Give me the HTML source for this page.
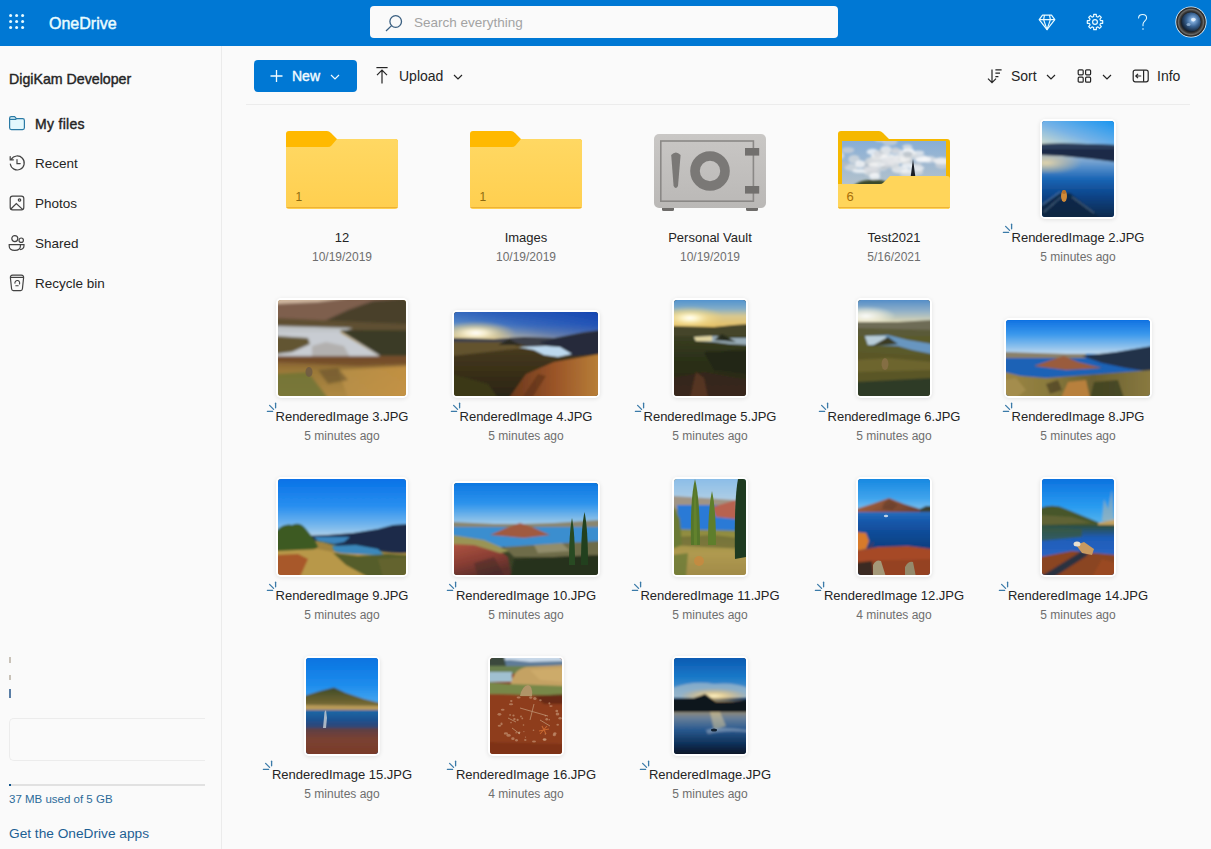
<!DOCTYPE html>
<html><head><meta charset="utf-8">
<style>
*{box-sizing:border-box}
html,body{margin:0;padding:0}
body{width:1211px;height:849px;overflow:hidden;background:#fafafa;font-family:"Liberation Sans",sans-serif;color:#242424;position:relative}
.a{position:absolute}
.t{position:absolute;white-space:nowrap;line-height:16px}
.nm{position:absolute;text-align:center;font-size:13px;color:#242424;line-height:16px;white-space:nowrap;width:184px}
.dt{position:absolute;text-align:center;font-size:12px;color:#6e6e6e;line-height:14px;white-space:nowrap;width:184px}
.ph{position:absolute;border-radius:3px;box-shadow:0 0 0 2px #fff,0 1px 4px 2px rgba(0,0,0,0.10);overflow:hidden}
.ph svg{display:block}
</style></head><body>
<div class="a" style="left:0;top:0;width:1211px;height:46px;background:#0078d4"></div><svg class="a" style="left:0;top:0" width="30" height="45"><g fill="#e6fbff"><circle cx="10.6" cy="15.4" r="1.5"/><circle cx="10.6" cy="21.4" r="1.5"/><circle cx="10.6" cy="27.4" r="1.5"/><circle cx="16.6" cy="15.4" r="1.5"/><circle cx="16.6" cy="21.4" r="1.5"/><circle cx="16.6" cy="27.4" r="1.5"/><circle cx="22.6" cy="15.4" r="1.5"/><circle cx="22.6" cy="21.4" r="1.5"/><circle cx="22.6" cy="27.4" r="1.5"/></g></svg><div class="t" style="left:49px;top:16px;font-size:16px;font-weight:400;-webkit-text-stroke:0.45px #eafcff;color:#eafcff">OneDrive</div><div class="a" style="left:370px;top:6px;width:468px;height:32px;background:#fafafa;border-radius:4px"></div><svg class="a" style="left:380px;top:10px" width="26" height="24"><g fill="none" stroke="#3a5f80" stroke-width="1.3"><circle cx="15.7" cy="11.5" r="5.8"/><path d="M11.6 15.6 L6 21"/></g></svg><div class="t" style="left:414px;top:15px;font-size:13.5px;color:#a3a3a3">Search everything</div><svg class="a" style="left:1036px;top:12px" width="22" height="21"><g fill="none" stroke="#e9fbff" stroke-width="1.2" stroke-linejoin="round"><path d="M6.5 3.2 H15.5 L18.8 7.6 L11 17.6 L3.2 7.6 Z"/><path d="M3.2 7.6 H18.8 M8.5 3.2 L7.6 7.6 L11 17.6 L14.4 7.6 L13.5 3.2"/></g></svg><svg class="a" style="left:1085px;top:12px" width="20" height="20"><g fill="none" stroke="#e9fbff" stroke-width="1.2" stroke-linejoin="round"><path d="M15.53 8.63 L17.69 8.72 L17.69 11.28 L15.53 11.37 L14.88 12.94 L16.35 14.54 L14.54 16.35 L12.94 14.88 L11.37 15.53 L11.28 17.69 L8.72 17.69 L8.63 15.53 L7.06 14.88 L5.46 16.35 L3.65 14.54 L5.12 12.94 L4.47 11.37 L2.31 11.28 L2.31 8.72 L4.47 8.63 L5.12 7.06 L3.65 5.46 L5.46 3.65 L7.06 5.12 L8.63 4.47 L8.72 2.31 L11.28 2.31 L11.37 4.47 L12.94 5.12 L14.54 3.65 L16.35 5.46 L14.88 7.06 Z"/><circle cx="10" cy="10" r="2.4"/></g></svg><svg class="a" style="left:1135px;top:12px" width="16" height="20"><g fill="none" stroke="#e9fbff" stroke-width="1.05" stroke-linecap="round"><path d="M3.6 6 C3.6 3.4 5.4 2.4 7.6 2.4 C9.8 2.4 11.6 3.8 11.6 6 C11.6 8.6 8 9.2 8 12.3 V13.8"/></g><circle cx="8" cy="17" r="0.8" fill="#e9fbff"/></svg><svg class="a" style="left:1175px;top:6px" width="32" height="32" viewBox="0 0 32 32"><defs><radialGradient id="avl" cx="0.6" cy="0.4" r="0.6"><stop offset="0" stop-color="#d8ecff"/><stop offset="0.2" stop-color="#7aa6d6"/><stop offset="0.55" stop-color="#3a6494"/><stop offset="1" stop-color="#142438"/></radialGradient><radialGradient id="avr" cx="0.5" cy="0.5" r="0.5"><stop offset="0.6" stop-color="#141414"/><stop offset="0.75" stop-color="#3a3a3a"/><stop offset="0.85" stop-color="#6a6a68"/><stop offset="0.93" stop-color="#303030"/><stop offset="1" stop-color="#202020"/></radialGradient></defs><circle cx="16" cy="16" r="15.6" fill="#e8f6ff"/><circle cx="16" cy="16" r="14.8" fill="url(#avr)"/><circle cx="16" cy="16" r="9.8" fill="url(#avl)"/><ellipse cx="18.4" cy="13.6" rx="2.4" ry="1.8" fill="#eef6ff" opacity="0.8"/><ellipse cx="13.5" cy="18.5" rx="2" ry="1.5" fill="#b8d4f0" opacity="0.6"/></svg><div class="a" style="left:221px;top:46px;width:1px;height:803px;background:#ebebeb"></div><div class="t" style="left:9px;top:71px;font-size:14.2px;-webkit-text-stroke:0.4px #242424;color:#242424">DigiKam Developer</div><div class="t" style="left:35px;top:116px;font-size:14px;-webkit-text-stroke:0.4px #242424;letter-spacing:0.3px;color:#242424">My files</div><div class="t" style="left:35px;top:156px;font-size:13.5px;color:#242424">Recent</div><div class="t" style="left:35px;top:196px;font-size:13.5px;color:#242424">Photos</div><div class="t" style="left:35px;top:236px;font-size:13.5px;color:#242424">Shared</div><div class="t" style="left:35px;top:276px;font-size:13.5px;color:#242424">Recycle bin</div><svg class="a" style="left:8px;top:115px" width="18" height="16"><path d="M1.6 3.2 Q1.6 1.6 3.2 1.6 H6.6 L8.4 3.6 H14.6 Q16.4 3.6 16.4 5.4 V12.8 Q16.4 14.6 14.6 14.6 H3.4 Q1.6 14.6 1.6 12.8 Z" fill="#e3f8fd" stroke="#2a7aa5" stroke-width="1.2"/><path d="M1.6 4.4 H7.6 L8.4 3.6" fill="none" stroke="#2a7aa5" stroke-width="1.2"/></svg><svg class="a" style="left:8px;top:154px" width="18" height="18"><g fill="none" stroke="#424242" stroke-width="1.2" stroke-linecap="round"><path d="M3.2 5.4 A7 7 0 1 1 2.3 10"/><path d="M2.2 2.6 V5.8 H5.4"/><path d="M9 5.6 V9.6 H12.2"/></g></svg><svg class="a" style="left:9px;top:195px" width="16" height="16"><g fill="none" stroke="#424242" stroke-width="1.2"><rect x="1.2" y="1.2" width="13.6" height="13.6" rx="2.4"/><path d="M1.6 14.2 L7.3 8.6 L13.6 14.4"/><circle cx="10.5" cy="5" r="1.2"/></g></svg><svg class="a" style="left:8px;top:234px" width="18" height="18"><g fill="none" stroke="#424242" stroke-width="1.2"><circle cx="6.8" cy="4.6" r="3"/><circle cx="13.2" cy="6.2" r="2.2"/><path d="M1.2 10.6 H12.4 V12 Q12.4 16.4 6.8 16.4 Q1.2 16.4 1.2 12 Z"/><path d="M13 10.6 H16 V11.6 Q16 15.4 12 15.6"/></g></svg><svg class="a" style="left:9px;top:274px" width="16" height="18"><g fill="none" stroke="#424242" stroke-width="1.2" stroke-linejoin="round"><path d="M3.6 1.2 H12.4 Q14.8 1.2 14.6 3.8 L13.4 15 Q13.2 16.6 11.6 16.6 H4.4 Q2.8 16.6 2.6 15 L1.4 3.8 Q1.2 1.2 3.6 1.2 Z"/><path d="M1.6 3.4 H14.4"/><path d="M6 9.6 A2.4 2.4 0 1 1 10.2 10.4 M6.4 11.8 H9.6" stroke-width="1.1"/></g></svg><div class="a" style="left:9px;top:718px;width:196px;height:43px;border:1px solid #ececec;border-right:none;border-radius:5px 0 0 5px"></div><div class="a" style="left:9px;top:784px;width:196px;height:2px;background:#e1e1e1"></div><div class="a" style="left:9px;top:784px;width:2px;height:2px;background:#0f548c"></div><div class="t" style="left:9px;top:791px;font-size:11.5px;color:#2b6a99">37 MB used of 5 GB</div><div class="t" style="left:9px;top:826px;font-size:13.7px;color:#1d5f93">Get the OneDrive apps</div><div class="a" style="left:9px;top:657px;width:2px;height:6px;background:#c9c2b8"></div><div class="a" style="left:9px;top:675px;width:2px;height:5px;background:#c9c2b8"></div><div class="a" style="left:9px;top:689px;width:2px;height:9px;background:#5a7ea6"></div><div class="a" style="left:254px;top:60px;width:103px;height:32px;background:#0078d4;border-radius:4px"></div><svg class="a" style="left:268px;top:68px" width="16" height="16"><path d="M8.5 2 V14 M2.5 8 H14.5" stroke="#f2fbff" stroke-width="1.3"/></svg><div class="t" style="left:292px;top:68px;font-size:14px;-webkit-text-stroke:0.4px #f2fbff;color:#f2fbff">New</div><svg class="a" style="left:328px;top:70px" width="14" height="12"><path d="M3 5 L7 9 L11 5" fill="none" stroke="#f2fbff" stroke-width="1.2"/></svg><svg class="a" style="left:374px;top:66px" width="16" height="19"><g fill="none" stroke="#242424" stroke-width="1.2"><path d="M2.4 1.6 H13.6"/><path d="M8 4.2 V17.6 M3 9.2 L8 4.2 L13 9.2"/></g></svg><div class="t" style="left:399px;top:68px;font-size:14px;color:#242424">Upload</div><svg class="a" style="left:451px;top:70px" width="14" height="12"><path d="M3 5 L7 9 L11 5" fill="none" stroke="#242424" stroke-width="1.2"/></svg><svg class="a" style="left:986px;top:67px" width="18" height="18"><g fill="none" stroke="#242424" stroke-width="1.2"><path d="M6 2.4 V15.6 M2 11.6 L6 15.6 L10 11.6"/><path d="M9.4 2.8 H15.6 M9.4 6.2 H14 M9.4 9.6 H12.4"/></g></svg><div class="t" style="left:1011px;top:68px;font-size:14px;color:#242424">Sort</div><svg class="a" style="left:1044px;top:70px" width="14" height="12"><path d="M3 5 L7 9 L11 5" fill="none" stroke="#242424" stroke-width="1.2"/></svg><svg class="a" style="left:1076px;top:68px" width="17" height="16"><g fill="none" stroke="#242424" stroke-width="1.2"><rect x="2.2" y="1.8" width="5" height="5" rx="1"/><rect x="9.6" y="1.8" width="5" height="5" rx="1"/><rect x="2.2" y="9.2" width="5" height="5" rx="1"/><rect x="9.6" y="9.2" width="5" height="5" rx="1"/></g></svg><svg class="a" style="left:1100px;top:70px" width="14" height="12"><path d="M3 5 L7 9 L11 5" fill="none" stroke="#242424" stroke-width="1.2"/></svg><svg class="a" style="left:1131px;top:68px" width="19" height="16"><g fill="none" stroke="#242424" stroke-width="1.2"><rect x="2.2" y="2.2" width="15" height="11.6" rx="2"/><path d="M12.6 2.2 V13.8"/><path d="M4.8 8 H10.2 M7 5.8 L4.8 8 L7 10.2"/></g></svg><div class="t" style="left:1157px;top:68px;font-size:14px;color:#242424">Info</div><div class="a" style="left:246px;top:104px;width:944px;height:1px;background:#ececec"></div><svg class="a" style="left:286px;top:131px;overflow:visible" width="112" height="78" viewBox="0 0 112 78"><defs><linearGradient id="fg" x1="0" y1="0" x2="0" y2="1"><stop offset="0" stop-color="#ffd863"/><stop offset="1" stop-color="#ffcf4f"/></linearGradient></defs><path d="M0 3 Q0 0 3 0 H41 Q43 0 45 2 L51 8 H109 Q112 8 112 11 V30 H0 Z" fill="#ffb900"/><path d="M0 16 H42 Q44 16 45.5 14.5 L51 8 H109 Q112 8 112 11 V75 Q112 78 109 78 H3 Q0 78 0 75 Z" fill="url(#fg)"/><path d="M0.5 76.5 H111.5" stroke="#e8a62a" stroke-width="1" opacity="0.7"/><text x="9.5" y="70" font-family="Liberation Sans" font-size="12" fill="#8f6a10">1</text></svg><div class="nm" style="left:250px;top:230px">12</div><div class="dt" style="left:250px;top:250px">10/19/2019</div><svg class="a" style="left:470px;top:131px;overflow:visible" width="112" height="78" viewBox="0 0 112 78"><defs><linearGradient id="fg" x1="0" y1="0" x2="0" y2="1"><stop offset="0" stop-color="#ffd863"/><stop offset="1" stop-color="#ffcf4f"/></linearGradient></defs><path d="M0 3 Q0 0 3 0 H41 Q43 0 45 2 L51 8 H109 Q112 8 112 11 V30 H0 Z" fill="#ffb900"/><path d="M0 16 H42 Q44 16 45.5 14.5 L51 8 H109 Q112 8 112 11 V75 Q112 78 109 78 H3 Q0 78 0 75 Z" fill="url(#fg)"/><path d="M0.5 76.5 H111.5" stroke="#e8a62a" stroke-width="1" opacity="0.7"/><text x="9.5" y="70" font-family="Liberation Sans" font-size="12" fill="#8f6a10">1</text></svg><div class="nm" style="left:434px;top:230px">Images</div><div class="dt" style="left:434px;top:250px">10/19/2019</div><svg class="a" style="left:654px;top:134px" width="113" height="80" viewBox="0 0 113 80"><defs><linearGradient id="vg" x1="0" y1="0" x2="0" y2="1"><stop offset="0" stop-color="#c9c7c5"/><stop offset="1" stop-color="#bab8b6"/></linearGradient></defs><rect x="8" y="72" width="12" height="5" rx="1.5" fill="#6e6c6a"/><rect x="92" y="72" width="12" height="5" rx="1.5" fill="#6e6c6a"/><rect x="0" y="0" width="112" height="74" rx="5" fill="url(#vg)"/><rect x="6.8" y="7" width="92.6" height="60.2" fill="none" stroke="#8a8886" stroke-width="1.6"/><circle cx="56" cy="37" r="15" fill="none" stroke="#7a7876" stroke-width="9.6"/><path d="M17.2 21 Q21.8 16 26.6 21 L24 52 Q21.8 56 19.6 52 Z" fill="#7a7876"/><rect x="91" y="14" width="14.2" height="7.6" fill="#72706e"/><rect x="91" y="52" width="14.2" height="7.6" fill="#72706e"/></svg><div class="nm" style="left:618px;top:230px">Personal Vault</div><div class="dt" style="left:618px;top:250px">10/19/2019</div><svg class="a" style="left:838px;top:131px;overflow:visible" width="112" height="78" viewBox="0 0 112 78"><path d="M0 3 Q0 0 3 0 H41 Q43 0 45 2 L51 8 H109 Q112 8 112 11 V75 Q112 78 109 78 H3 Q0 78 0 75 Z" fill="#f5b800"/><g transform="translate(4,10)"><defs><linearGradient id="pfs" x1="0" y1="0" x2="0" y2="1"><stop offset="0" stop-color="#88aed6"/><stop offset="1" stop-color="#b4c2cc"/></linearGradient><filter id="pfb"><feGaussianBlur stdDeviation="0.8"/></filter><clipPath id="pfc"><rect width="104" height="44"/></clipPath></defs><g clip-path="url(#pfc)"><rect width="104" height="44" fill="url(#pfs)"/><g filter="url(#pfb)"><ellipse cx="22.6" cy="23.4" rx="8.6" ry="3.2" fill="#b4bcc4" opacity="0.7"/><ellipse cx="61.6" cy="15.4" rx="8.0" ry="3.2" fill="#b4bcc4" opacity="0.7"/><ellipse cx="54.8" cy="16.1" rx="5.5" ry="2.2" fill="#ffffff" opacity="0.7"/><ellipse cx="30.6" cy="10.9" rx="6.0" ry="3.1" fill="#ffffff" opacity="0.7"/><ellipse cx="41.5" cy="16.5" rx="4.1" ry="3.3" fill="#f4f4f4" opacity="0.7"/><ellipse cx="100.1" cy="24.1" rx="7.0" ry="3.9" fill="#cfd3d8" opacity="0.7"/><ellipse cx="9.0" cy="26.3" rx="6.6" ry="3.6" fill="#dcdee0" opacity="0.7"/><ellipse cx="62.1" cy="20.1" rx="7.3" ry="3.0" fill="#b4bcc4" opacity="0.7"/><ellipse cx="97.9" cy="19.5" rx="7.5" ry="2.8" fill="#e4e6e8" opacity="0.7"/><ellipse cx="46.1" cy="19.8" rx="6.8" ry="2.3" fill="#f4f4f4" opacity="0.7"/><ellipse cx="65.5" cy="12.7" rx="8.8" ry="4.1" fill="#f4f4f4" opacity="0.7"/><ellipse cx="64.5" cy="40.1" rx="4.3" ry="2.9" fill="#ffffff" opacity="0.7"/><ellipse cx="44.5" cy="22.1" rx="7.1" ry="3.9" fill="#cfd3d8" opacity="0.7"/><ellipse cx="41.2" cy="26.6" rx="4.1" ry="3.0" fill="#f4f4f4" opacity="0.7"/><ellipse cx="76.9" cy="30.6" rx="4.1" ry="3.2" fill="#dcdee0" opacity="0.7"/><ellipse cx="65.5" cy="30.4" rx="6.2" ry="2.5" fill="#ffffff" opacity="0.7"/><ellipse cx="55.1" cy="10.7" rx="5.9" ry="3.0" fill="#e4e6e8" opacity="0.7"/><ellipse cx="100.0" cy="20.1" rx="8.9" ry="3.5" fill="#f4f4f4" opacity="0.7"/><ellipse cx="57.9" cy="28.7" rx="8.3" ry="3.6" fill="#f4f4f4" opacity="0.7"/><ellipse cx="65.0" cy="21.3" rx="6.2" ry="2.0" fill="#b4bcc4" opacity="0.7"/><ellipse cx="42.4" cy="26.6" rx="4.4" ry="2.2" fill="#b4bcc4" opacity="0.7"/><ellipse cx="49.2" cy="18.8" rx="5.8" ry="3.6" fill="#e4e6e8" opacity="0.7"/><ellipse cx="78.7" cy="17.4" rx="6.9" ry="4.2" fill="#e4e6e8" opacity="0.7"/><ellipse cx="37.6" cy="14.4" rx="5.1" ry="3.5" fill="#ffffff" opacity="0.7"/><ellipse cx="66.5" cy="33.7" rx="8.7" ry="2.5" fill="#dcdee0" opacity="0.7"/><ellipse cx="76.1" cy="11.7" rx="6.1" ry="2.3" fill="#f4f4f4" opacity="0.7"/><ellipse cx="33.6" cy="19.5" rx="7.7" ry="3.0" fill="#dcdee0" opacity="0.7"/><ellipse cx="66.4" cy="9.2" rx="5.5" ry="2.4" fill="#ffffff" opacity="0.7"/><ellipse cx="64.3" cy="19.3" rx="6.4" ry="3.6" fill="#b4bcc4" opacity="0.7"/><ellipse cx="37.3" cy="15.2" rx="8.6" ry="2.5" fill="#f4f4f4" opacity="0.7"/><ellipse cx="74.4" cy="23.9" rx="5.2" ry="2.1" fill="#cfd3d8" opacity="0.7"/><ellipse cx="30.8" cy="28.6" rx="4.7" ry="2.9" fill="#dcdee0" opacity="0.7"/><ellipse cx="86.8" cy="18.4" rx="7.5" ry="3.5" fill="#e4e6e8" opacity="0.7"/><ellipse cx="6.0" cy="9.1" rx="6.4" ry="2.9" fill="#cfd3d8" opacity="0.7"/><ellipse cx="56.8" cy="19.6" rx="7.2" ry="3.2" fill="#ffffff" opacity="0.7"/><ellipse cx="47.1" cy="24.5" rx="4.4" ry="3.1" fill="#cfd3d8" opacity="0.7"/><ellipse cx="47.8" cy="0.7" rx="7.7" ry="3.8" fill="#cfd3d8" opacity="0.7"/><ellipse cx="30.2" cy="31.0" rx="8.5" ry="4.2" fill="#dcdee0" opacity="0.7"/><ellipse cx="57.6" cy="19.2" rx="6.5" ry="2.0" fill="#ffffff" opacity="0.7"/><ellipse cx="28.6" cy="28.0" rx="7.0" ry="2.2" fill="#ffffff" opacity="0.7"/><ellipse cx="65.8" cy="24.6" rx="6.1" ry="2.8" fill="#ffffff" opacity="0.7"/><ellipse cx="42.9" cy="10.6" rx="6.3" ry="3.4" fill="#b4bcc4" opacity="0.7"/><ellipse cx="52.0" cy="17.8" rx="7.0" ry="3.2" fill="#e4e6e8" opacity="0.7"/><ellipse cx="63.3" cy="18.8" rx="7.9" ry="3.7" fill="#dcdee0" opacity="0.7"/><ellipse cx="51.9" cy="21.4" rx="5.5" ry="3.7" fill="#e4e6e8" opacity="0.7"/><ellipse cx="12.1" cy="18.3" rx="5.7" ry="4.3" fill="#dcdee0" opacity="0.7"/><ellipse cx="68.6" cy="15.0" rx="7.3" ry="2.5" fill="#dcdee0" opacity="0.7"/><ellipse cx="65.3" cy="5.8" rx="5.0" ry="2.5" fill="#e4e6e8" opacity="0.7"/><ellipse cx="33.9" cy="16.1" rx="4.7" ry="3.2" fill="#f4f4f4" opacity="0.7"/><ellipse cx="37.8" cy="-1.4" rx="5.4" ry="2.4" fill="#dcdee0" opacity="0.7"/><ellipse cx="-1.8" cy="23.7" rx="8.2" ry="3.0" fill="#b4bcc4" opacity="0.7"/><ellipse cx="31.1" cy="20.3" rx="8.2" ry="4.5" fill="#dcdee0" opacity="0.7"/><ellipse cx="32.7" cy="35.3" rx="5.4" ry="3.5" fill="#ffffff" opacity="0.7"/><ellipse cx="44.0" cy="8.7" rx="5.5" ry="4.0" fill="#f4f4f4" opacity="0.7"/><ellipse cx="36.5" cy="12.9" rx="4.9" ry="3.9" fill="#cfd3d8" opacity="0.7"/><ellipse cx="53.0" cy="24.9" rx="4.2" ry="3.6" fill="#dcdee0" opacity="0.7"/><ellipse cx="75.0" cy="27.1" rx="7.2" ry="2.9" fill="#f4f4f4" opacity="0.7"/><ellipse cx="45.6" cy="14.5" rx="6.4" ry="2.4" fill="#f4f4f4" opacity="0.7"/><ellipse cx="52.9" cy="8.9" rx="4.2" ry="2.6" fill="#cfd3d8" opacity="0.7"/><ellipse cx="-4.3" cy="14.6" rx="6.5" ry="4.5" fill="#e4e6e8" opacity="0.7"/><ellipse cx="18.6" cy="29.9" rx="8.5" ry="2.2" fill="#ffffff" opacity="0.7"/><ellipse cx="32.0" cy="26.4" rx="5.0" ry="4.2" fill="#f4f4f4" opacity="0.7"/><ellipse cx="29.7" cy="28.2" rx="8.4" ry="4.0" fill="#cfd3d8" opacity="0.7"/><ellipse cx="18.1" cy="23.0" rx="5.0" ry="3.8" fill="#ffffff" opacity="0.7"/><ellipse cx="63.0" cy="17.9" rx="5.2" ry="3.0" fill="#f4f4f4" opacity="0.7"/><ellipse cx="81.5" cy="18.4" rx="8.0" ry="2.8" fill="#ffffff" opacity="0.7"/><ellipse cx="65.7" cy="13.4" rx="4.4" ry="3.1" fill="#b4bcc4" opacity="0.7"/><ellipse cx="35.0" cy="23.4" rx="8.6" ry="2.5" fill="#f4f4f4" opacity="0.7"/><ellipse cx="46.2" cy="21.0" rx="6.7" ry="3.7" fill="#e4e6e8" opacity="0.7"/><ellipse cx="-46.1" cy="26.9" rx="8.5" ry="3.3" fill="#ffffff" opacity="0.7"/><path d="M10 46 Q18 38 30 39 Q40 38 46 42 L46 46 H10 Z" fill="#3a4a2a"/></g><path d="M68.5 37 L71 18 L73.5 37 Z" fill="#1a1e26"/></g></g><path d="M0 53 H42 Q44 53 45.5 51.5 L52 45 H109 Q112 45 112 48 V75 Q112 78 109 78 H3 Q0 78 0 75 Z" fill="#ffd55a"/><path d="M0.5 76.5 H111.5" stroke="#e8a62a" stroke-width="1" opacity="0.7"/><text x="8.5" y="70" font-family="Liberation Sans" font-size="13" fill="#a86e08">6</text></svg><div class="nm" style="left:802px;top:230px">Test2021</div><div class="dt" style="left:802px;top:250px">5/16/2021</div><div class="ph" style="left:1042px;top:121px;width:72px;height:96px"><svg width="72" height="96" viewBox="0 0 72 96" preserveAspectRatio="none"><defs><linearGradient id="p2s" x1="0.9" y1="0" x2="0.1" y2="1"><stop offset="0" stop-color="#1a96f0"/><stop offset="0.5" stop-color="#76b2e6"/><stop offset="0.85" stop-color="#c8d8d0"/><stop offset="1" stop-color="#f0e4b0"/></linearGradient><linearGradient id="p2w" x1="0" y1="0" x2="0" y2="1"><stop offset="0" stop-color="#a8c0d8"/><stop offset="0.2" stop-color="#5a92cc"/><stop offset="0.4" stop-color="#1a64b4"/><stop offset="0.65" stop-color="#0c4488"/><stop offset="1" stop-color="#082848"/></linearGradient><radialGradient id="p2g" cx="0.1" cy="0.5" r="0.6"><stop offset="0" stop-color="#f0dca8" stop-opacity="0.9"/><stop offset="0.6" stop-color="#e0c898" stop-opacity="0.4"/><stop offset="1" stop-color="#e0c898" stop-opacity="0"/></radialGradient><filter id="p2b"><feGaussianBlur stdDeviation="0.9"/></filter></defs><rect width="72" height="96" fill="#1a5aa0"/><g filter="url(#p2b)"><rect x="-2" y="-2" width="76" height="34" fill="url(#p2s)"/><rect x="-2" y="32" width="76" height="66" fill="url(#p2w)"/><rect x="-2" y="32" width="60" height="20" fill="url(#p2g)"/><path d="M-2 23 L20 22.5 L45 23 L74 24 V41 L50 38 L20 35 L-2 34 Z" fill="#1c2a46"/><path d="M-2 23 L20 22.5 L45 23 L74 24 V28 L-2 28 Z" fill="#2c3c5a"/><path d="M-2 86 L18 72 L28 72 L60 98 H-2 Z" fill="#0a2440" opacity="0.85"/><path d="M0 84 L18 71 M2 91 L19 76 M30 76 L52 92" stroke="#9ab8d0" stroke-width="1" opacity="0.55"/></g><ellipse cx="22" cy="75" rx="3" ry="6" fill="#d08a38"/><ellipse cx="22" cy="71" rx="2" ry="2" fill="#b87028"/></svg></div><svg class="a" style="left:1002px;top:223px" width="12" height="11" viewBox="0 0 12 11"><g stroke="#3a7aa8" stroke-width="1.3" stroke-linecap="round" fill="none"><path d="M9.6 1.2 V5.8"/><path d="M3.6 3.4 L7.6 7.4"/><path d="M1.4 9.4 H6.6"/></g></svg><div class="nm" style="left:986px;top:230px">RenderedImage 2.JPG</div><div class="dt" style="left:986px;top:250px">5 minutes ago</div><div class="ph" style="left:278px;top:300px;width:128px;height:96px"><svg width="128" height="96" viewBox="0 0 128 96" preserveAspectRatio="none"><defs><linearGradient id="p3g" x1="0" y1="0" x2="0" y2="1"><stop offset="0" stop-color="#7a5430"/><stop offset="0.35" stop-color="#9a7838"/><stop offset="1" stop-color="#b08a44"/></linearGradient><linearGradient id="p3gr" x1="0" y1="0" x2="1" y2="0"><stop offset="0" stop-color="#b89048"/><stop offset="1" stop-color="#c89444"/></linearGradient><filter id="p3b"><feGaussianBlur stdDeviation="1.4"/></filter></defs><rect width="128" height="96" fill="#a08040"/><g filter="url(#p3b)"><rect x="-2" y="-2" width="132" height="30" fill="#7e5e4e"/><path d="M-2 -2 H70 L40 2 L-2 4 Z" fill="#d0b8a0"/><path d="M40 24 L70 10 L95 1 L130 -2 V32 L40 30 Z" fill="#48402a"/><path d="M-2 18 L40 20 L80 22 L130 24 V30 H-2 Z" fill="#5e5030"/><path d="M-2 26 L75 28 L62 32 L-2 32 Z" fill="#c0c4c8"/><path d="M-2 32 L62 32 L104 57 L-2 57 Z" fill="#c8ccd2"/><path d="M62 30 L130 31 V57 L104 57 Z" fill="#3a3a26"/><path d="M-2 36 L30 38 L32 44 L14 52 L-2 54 Z" fill="#625430"/><path d="M34 46 L48 42 L66 46 L72 57 L34 57 Z" fill="#8a7a70" opacity="0.35"/><rect x="-2" y="56" width="132" height="42" fill="url(#p3g)"/><path d="M60 70 L130 66 V98 L70 98 Z" fill="url(#p3gr)" opacity="0.85"/><path d="M-2 74 L30 72 L50 98 H-2 Z" fill="#707436" opacity="0.85"/><path d="M-2 57 L128 57 L130 64 L80 66 L-2 62 Z" fill="#6a4228" opacity="0.6"/><path d="M40 70 L60 68 L70 80 L50 84 Z" fill="#5a4828" opacity="0.5"/></g><ellipse cx="31" cy="72" rx="3.5" ry="5" fill="#6e5a44" opacity="0.85"/></svg></div><svg class="a" style="left:266px;top:402px" width="12" height="11" viewBox="0 0 12 11"><g stroke="#3a7aa8" stroke-width="1.3" stroke-linecap="round" fill="none"><path d="M9.6 1.2 V5.8"/><path d="M3.6 3.4 L7.6 7.4"/><path d="M1.4 9.4 H6.6"/></g></svg><div class="nm" style="left:250px;top:409px">RenderedImage 3.JPG</div><div class="dt" style="left:250px;top:429px">5 minutes ago</div><div class="ph" style="left:454px;top:312px;width:144px;height:84px"><svg width="144" height="84" viewBox="0 0 144 84" preserveAspectRatio="none"><defs><linearGradient id="p4s" x1="0" y1="0" x2="0" y2="1"><stop offset="0" stop-color="#3a70c0"/><stop offset="0.45" stop-color="#5a8cc8"/><stop offset="0.8" stop-color="#b8b8a8"/><stop offset="1" stop-color="#e0c890"/></linearGradient><linearGradient id="p4s2" x1="0" y1="0.5" x2="1" y2="0"><stop offset="0" stop-color="#1444b0" stop-opacity="0"/><stop offset="0.4" stop-color="#1444b0" stop-opacity="0.5"/><stop offset="1" stop-color="#1040b0" stop-opacity="0.9"/></linearGradient><radialGradient id="p4sun" cx="0.5" cy="0.5" r="0.5"><stop offset="0" stop-color="#ffffff" stop-opacity="1"/><stop offset="0.25" stop-color="#fff4d0" stop-opacity="0.9"/><stop offset="0.6" stop-color="#f0d890" stop-opacity="0.5"/><stop offset="1" stop-color="#e8c880" stop-opacity="0"/></radialGradient><linearGradient id="p4f" x1="0" y1="0" x2="0" y2="1"><stop offset="0" stop-color="#4a3c1e"/><stop offset="1" stop-color="#2a2414"/></linearGradient><linearGradient id="p4o" x1="0" y1="0" x2="1" y2="0"><stop offset="0" stop-color="#6a381c"/><stop offset="0.5" stop-color="#9a5428"/><stop offset="1" stop-color="#b88038"/></linearGradient><filter id="p4b"><feGaussianBlur stdDeviation="1.3"/></filter></defs><rect width="144" height="84" fill="#3a3018"/><g filter="url(#p4b)"><rect x="-2" y="-2" width="148" height="32" fill="url(#p4s)"/><rect x="-2" y="-2" width="148" height="28" fill="url(#p4s2)"/><ellipse cx="22" cy="21" rx="40" ry="12" fill="url(#p4sun)"/><path d="M-2 26 L40 27 L70 25 L100 26 L130 20 L146 18 V44 H-2 Z" fill="#3e4048"/><path d="M85 30 L125 22 L146 19 V44 L118 44 Z" fill="#262c3a"/><path d="M-2 30 L60 30 L90 40 L120 44 L146 42 V86 H-2 Z" fill="url(#p4f)"/><path d="M-2 30 L50 30 L70 36 L-2 44 Z" fill="#6a5a34" opacity="0.8"/><path d="M64 35 L92 34 L106 35 L118 42 L104 45 L90 43 L80 38 Z" fill="#bcd8ee"/><path d="M44 33 L55 27 L66 33 Z" fill="#2a2a22"/><path d="M55 86 L72 62 L100 50 L146 42 V86 Z" fill="url(#p4o)"/><path d="M68 86 L84 62 L92 64 L78 86 Z" fill="#5a3018" opacity="0.6"/><path d="M-2 86 L-2 62 L34 72 L44 86 Z" fill="#3a3818"/></g></svg></div><svg class="a" style="left:450px;top:402px" width="12" height="11" viewBox="0 0 12 11"><g stroke="#3a7aa8" stroke-width="1.3" stroke-linecap="round" fill="none"><path d="M9.6 1.2 V5.8"/><path d="M3.6 3.4 L7.6 7.4"/><path d="M1.4 9.4 H6.6"/></g></svg><div class="nm" style="left:434px;top:409px">RenderedImage 4.JPG</div><div class="dt" style="left:434px;top:429px">5 minutes ago</div><div class="ph" style="left:674px;top:300px;width:72px;height:96px"><svg width="72" height="96" viewBox="0 0 72 96" preserveAspectRatio="none"><defs><linearGradient id="p5s" x1="0" y1="0" x2="0" y2="1"><stop offset="0" stop-color="#4a8ed0"/><stop offset="0.35" stop-color="#80acc8"/><stop offset="0.6" stop-color="#d8c890"/><stop offset="1" stop-color="#e8c060"/></linearGradient><radialGradient id="p5sun" cx="0.5" cy="0.5" r="0.5"><stop offset="0" stop-color="#ffffff" stop-opacity="1"/><stop offset="0.2" stop-color="#fff8d0" stop-opacity="0.95"/><stop offset="0.55" stop-color="#f8e090" stop-opacity="0.55"/><stop offset="1" stop-color="#f0d070" stop-opacity="0"/></radialGradient><linearGradient id="p5f" x1="0" y1="0" x2="0" y2="1"><stop offset="0" stop-color="#3a3e22"/><stop offset="0.4" stop-color="#2a3018"/><stop offset="1" stop-color="#2e2618"/></linearGradient><filter id="p5b"><feGaussianBlur stdDeviation="1.3"/></filter></defs><rect width="72" height="96" fill="#2e3020"/><g filter="url(#p5b)"><rect x="-2" y="-2" width="76" height="30" fill="url(#p5s)"/><ellipse cx="16" cy="18" rx="34" ry="12" fill="url(#p5sun)"/><path d="M-2 26 L40 27 L60 25 L74 24 V38 H-2 Z" fill="#44442c"/><rect x="-2" y="36" width="76" height="62" fill="url(#p5f)"/><path d="M20 37 L42 36 L56 38 L74 38 V45 L55 44 L40 42 L22 41 Z" fill="#98acb8"/><path d="M20 37 L38 36 L38 41 L22 41 Z" fill="#e0d4a0"/><path d="M40 40 L48 34 L62 42 Z" fill="#262a1a"/><path d="M30 52 L74 50 V74 L40 70 Z" fill="#1c2212" opacity="0.7"/><path d="M-2 78 L30 72 L74 80 V98 H-2 Z" fill="#3a281c" opacity="0.8"/><path d="M16 98 L22 72 L30 78 L34 98 Z" fill="#6a3e2a" opacity="0.6"/></g></svg></div><svg class="a" style="left:634px;top:402px" width="12" height="11" viewBox="0 0 12 11"><g stroke="#3a7aa8" stroke-width="1.3" stroke-linecap="round" fill="none"><path d="M9.6 1.2 V5.8"/><path d="M3.6 3.4 L7.6 7.4"/><path d="M1.4 9.4 H6.6"/></g></svg><div class="nm" style="left:618px;top:409px">RenderedImage 5.JPG</div><div class="dt" style="left:618px;top:429px">5 minutes ago</div><div class="ph" style="left:858px;top:300px;width:72px;height:96px"><svg width="72" height="96" viewBox="0 0 72 96" preserveAspectRatio="none"><defs><linearGradient id="p6s" x1="0" y1="0" x2="0" y2="1"><stop offset="0" stop-color="#4a88c8"/><stop offset="0.5" stop-color="#90b0c8"/><stop offset="1" stop-color="#e8dcb0"/></linearGradient><radialGradient id="p6sun" cx="0.5" cy="0.5" r="0.5"><stop offset="0" stop-color="#ffffff" stop-opacity="0.95"/><stop offset="0.5" stop-color="#fff8e0" stop-opacity="0.6"/><stop offset="1" stop-color="#ffffe0" stop-opacity="0"/></radialGradient><filter id="p6b"><feGaussianBlur stdDeviation="1.3"/></filter></defs><rect width="72" height="96" fill="#565428"/><g filter="url(#p6b)"><rect x="-2" y="-2" width="76" height="26" fill="url(#p6s)"/><ellipse cx="8" cy="16" rx="30" ry="10" fill="url(#p6sun)"/><path d="M-2 22 L40 22 L74 20 V36 H-2 Z" fill="#6e6c56"/><path d="M-2 28 L74 30 V38 H-2 Z" fill="#5a5a38"/><rect x="-2" y="36" width="76" height="62" fill="#5a5a2c"/><path d="M7 36 L30 35 L50 40 L74 44 V54 L54 50 L40 46 L10 45 Z" fill="#6896c0"/><path d="M7 36 L28 36 L26 44 L10 45 Z" fill="#b8ccd8"/><path d="M14 46 L30 37 L40 44 Z" fill="#3a3a22"/><path d="M-2 52 L74 56 V98 H-2 Z" fill="#5a5628"/><path d="M-2 60 L30 58 L74 62 V70 L-2 72 Z" fill="#7a7034" opacity="0.6"/><path d="M-2 82 L74 78 V98 H-2 Z" fill="#2e3a28"/></g><ellipse cx="27" cy="64" rx="3.5" ry="6" fill="#8a7048" opacity="0.8"/></svg></div><svg class="a" style="left:818px;top:402px" width="12" height="11" viewBox="0 0 12 11"><g stroke="#3a7aa8" stroke-width="1.3" stroke-linecap="round" fill="none"><path d="M9.6 1.2 V5.8"/><path d="M3.6 3.4 L7.6 7.4"/><path d="M1.4 9.4 H6.6"/></g></svg><div class="nm" style="left:802px;top:409px">RenderedImage 6.JPG</div><div class="dt" style="left:802px;top:429px">5 minutes ago</div><div class="ph" style="left:1006px;top:320px;width:144px;height:76px"><svg width="144" height="76" viewBox="0 0 144 76" preserveAspectRatio="none"><defs><linearGradient id="p8s" x1="0" y1="0" x2="0" y2="1"><stop offset="0" stop-color="#0a6ce0"/><stop offset="0.45" stop-color="#3a98ec"/><stop offset="0.8" stop-color="#8cc0ec"/><stop offset="1" stop-color="#c0d8ec"/></linearGradient><linearGradient id="p8f" x1="0" y1="0" x2="1" y2="0"><stop offset="0" stop-color="#9a8444"/><stop offset="0.3" stop-color="#8a7a3c"/><stop offset="0.6" stop-color="#6a6030"/><stop offset="1" stop-color="#8a7a40"/></linearGradient><filter id="p8b"><feGaussianBlur stdDeviation="1.1"/></filter></defs><rect width="144" height="76" fill="#1e64b8"/><g filter="url(#p8b)"><rect x="-2" y="-2" width="148" height="36" fill="url(#p8s)"/><path d="M-2 32 L30 33 L60 34 L80 34 V38 L50 39 L-2 40 Z" fill="#8a806a"/><rect x="-2" y="38" width="148" height="20" fill="#1e62b6"/><path d="M76 36 L110 32 L146 26 V52 L120 48 L96 43 Z" fill="#22304a"/><path d="M28 46 L45 40 L58 36 L72 42 L96 48 L60 50 Z" fill="#9a5c3c"/><path d="M-2 52 L15 56 L40 58 L80 55 L146 50 V78 H-2 Z" fill="url(#p8f)"/><path d="M55 78 L62 62 L80 60 L84 78 Z" fill="#b8803c"/><path d="M84 78 L88 62 L112 60 L118 78 Z" fill="#3e4222" opacity="0.85"/><path d="M-2 60 L10 58 L20 70 L10 78 H-2 Z" fill="#a89050" opacity="0.8"/><path d="M40 64 L52 60 L56 70 L44 74 Z" fill="#4a4024" opacity="0.7"/></g></svg></div><svg class="a" style="left:1002px;top:402px" width="12" height="11" viewBox="0 0 12 11"><g stroke="#3a7aa8" stroke-width="1.3" stroke-linecap="round" fill="none"><path d="M9.6 1.2 V5.8"/><path d="M3.6 3.4 L7.6 7.4"/><path d="M1.4 9.4 H6.6"/></g></svg><div class="nm" style="left:986px;top:409px">RenderedImage 8.JPG</div><div class="dt" style="left:986px;top:429px">5 minutes ago</div><div class="ph" style="left:278px;top:479px;width:128px;height:96px"><svg width="128" height="96" viewBox="0 0 128 96" preserveAspectRatio="none"><defs><linearGradient id="p9s" x1="0" y1="0" x2="0" y2="1"><stop offset="0" stop-color="#0670e6"/><stop offset="0.5" stop-color="#2a90f0"/><stop offset="0.85" stop-color="#80bcec"/><stop offset="1" stop-color="#b8d4e8"/></linearGradient><filter id="p9b"><feGaussianBlur stdDeviation="1.2"/></filter></defs><rect width="128" height="96" fill="#a08440"/><g filter="url(#p9b)"><rect x="-2" y="-2" width="132" height="60" fill="url(#p9s)"/><path d="M26 57 L50 56 L75 54 L100 50 L115 46 L130 45 V75 L100 72 L70 70 L45 63 L28 60 Z" fill="#1e2c48"/><path d="M36 58 L72 58 L66 63 L56 65 L40 62 Z" fill="#3a84bc"/><path d="M54 67 L78 66 L100 70 L106 76 L70 76 L56 72 Z" fill="#3a88bc"/><path d="M-2 52 Q6 44 14 46 Q22 42 28 50 L36 60 L40 68 L30 74 L-2 74 Z" fill="#3c5a24"/><path d="M-2 72 L40 70 L60 74 L100 76 L130 74 V98 H-2 Z" fill="#b89848"/><path d="M-2 76 L20 75 L30 80 L22 98 H-2 Z" fill="#a8582a"/><path d="M55 74 L80 77 L110 75 L130 76 V98 L90 98 L68 86 Z" fill="#4a5626" opacity="0.9"/><path d="M100 80 L130 78 V98 H105 Z" fill="#6e6834" opacity="0.6"/></g></svg></div><svg class="a" style="left:266px;top:581px" width="12" height="11" viewBox="0 0 12 11"><g stroke="#3a7aa8" stroke-width="1.3" stroke-linecap="round" fill="none"><path d="M9.6 1.2 V5.8"/><path d="M3.6 3.4 L7.6 7.4"/><path d="M1.4 9.4 H6.6"/></g></svg><div class="nm" style="left:250px;top:588px">RenderedImage 9.JPG</div><div class="dt" style="left:250px;top:608px">5 minutes ago</div><div class="ph" style="left:454px;top:483px;width:144px;height:92px"><svg width="144" height="92" viewBox="0 0 144 92" preserveAspectRatio="none"><defs><linearGradient id="p10s" x1="0" y1="0" x2="0" y2="1"><stop offset="0" stop-color="#0a74e0"/><stop offset="0.5" stop-color="#2e94ec"/><stop offset="0.85" stop-color="#8ac0e8"/><stop offset="1" stop-color="#b8d2e4"/></linearGradient><linearGradient id="p10c" x1="0" y1="0" x2="0.4" y2="1"><stop offset="0" stop-color="#b85a44"/><stop offset="0.6" stop-color="#8a3e34"/><stop offset="1" stop-color="#5a2e2a"/></linearGradient><filter id="p10b"><feGaussianBlur stdDeviation="1.1"/></filter></defs><rect width="144" height="92" fill="#3a4226"/><g filter="url(#p10b)"><rect x="-2" y="-2" width="148" height="46" fill="url(#p10s)"/><path d="M-2 39 L40 41 L70 41 L100 40 L146 37 V48 H-2 Z" fill="#8a8670"/><rect x="-2" y="44" width="148" height="20" fill="#3a8ecf"/><path d="M36 52 L52 45 L66 40 L78 44 L96 52 L70 55 Z" fill="#a05a40"/><path d="M-2 56 L20 58 L44 66 L54 74 L58 94 H-2 Z" fill="url(#p10c)"/><path d="M-2 52 L30 57 L56 68 L46 70 L20 62 L-2 61 Z" fill="#9a9454"/><path d="M50 64 L80 62 L110 60 L146 58 V72 L100 74 L60 74 Z" fill="#6e6c4a"/><path d="M56 94 L60 76 L100 74 L146 72 V94 Z" fill="#26321e"/><path d="M80 62 L108 60 L116 68 L84 70 Z" fill="#b0aa88" opacity="0.55"/><path d="M20 80 L40 74 L50 92 L24 94 Z" fill="#3a2a28" opacity="0.4"/></g><path d="M115 82 Q115 50 118 35 Q121 50 121 82 Z" fill="#284a22"/><path d="M127 82 Q127 45 130.5 29 Q134 45 134 82 Z" fill="#22401e"/></svg></div><svg class="a" style="left:446px;top:581px" width="12" height="11" viewBox="0 0 12 11"><g stroke="#3a7aa8" stroke-width="1.3" stroke-linecap="round" fill="none"><path d="M9.6 1.2 V5.8"/><path d="M3.6 3.4 L7.6 7.4"/><path d="M1.4 9.4 H6.6"/></g></svg><div class="nm" style="left:434px;top:588px">RenderedImage 10.JPG</div><div class="dt" style="left:434px;top:608px">5 minutes ago</div><div class="ph" style="left:674px;top:479px;width:72px;height:96px"><svg width="72" height="96" viewBox="0 0 72 96" preserveAspectRatio="none"><defs><linearGradient id="p11s" x1="0" y1="0" x2="0" y2="1"><stop offset="0" stop-color="#88bce8"/><stop offset="1" stop-color="#b4d0e4"/></linearGradient><linearGradient id="p11g" x1="0" y1="0" x2="0" y2="1"><stop offset="0" stop-color="#8a8a3c"/><stop offset="0.5" stop-color="#b09a50"/><stop offset="1" stop-color="#a08a48"/></linearGradient><filter id="p11b"><feGaussianBlur stdDeviation="1.1"/></filter></defs><rect width="72" height="96" fill="#a08a48"/><g filter="url(#p11b)"><rect x="-2" y="-2" width="76" height="26" fill="url(#p11s)"/><path d="M-2 17 L30 19 L74 22 V30 H-2 Z" fill="#a09484"/><path d="M3 26 L62 26 V53 L5 53 Z" fill="#2a7ad6"/><path d="M38 28 L62 21 V40 L42 38 Z" fill="#b86250"/><path d="M-2 50 L74 52 V98 H-2 Z" fill="url(#p11g)"/><path d="M-2 58 L40 56 L74 60 V70 L30 68 L-2 66 Z" fill="#6a6a34" opacity="0.7"/><path d="M-2 24 L6 40 L8 66 L-2 70 Z" fill="#6a7a34"/><path d="M-2 76 L14 74 L12 98 H-2 Z" fill="#6a7a36" opacity="0.8"/></g><path d="M17 66 Q16 20 21 0 Q26 20 26 66 Z" fill="#56762a"/><path d="M20 66 Q19 30 21 8 Q23 30 23 66 Z" fill="#6a8a30" opacity="0.6"/><path d="M34 66 Q34 30 38 12 Q42 30 42 66 Z" fill="#5e7e2c"/><path d="M61 80 Q60 20 64 0 H72 V78 Z" fill="#1e3a20"/><ellipse cx="25" cy="82" rx="5" ry="5" fill="#c88a40" opacity="0.85"/></svg></div><svg class="a" style="left:631px;top:581px" width="12" height="11" viewBox="0 0 12 11"><g stroke="#3a7aa8" stroke-width="1.3" stroke-linecap="round" fill="none"><path d="M9.6 1.2 V5.8"/><path d="M3.6 3.4 L7.6 7.4"/><path d="M1.4 9.4 H6.6"/></g></svg><div class="nm" style="left:618px;top:588px">RenderedImage 11.JPG</div><div class="dt" style="left:618px;top:608px">5 minutes ago</div><div class="ph" style="left:858px;top:479px;width:72px;height:96px"><svg width="72" height="96" viewBox="0 0 72 96" preserveAspectRatio="none"><defs><linearGradient id="p12s" x1="0" y1="0" x2="0" y2="1"><stop offset="0" stop-color="#1486e0"/><stop offset="0.6" stop-color="#40a4ec"/><stop offset="1" stop-color="#8cc8f0"/></linearGradient><linearGradient id="p12w" x1="0" y1="0" x2="0" y2="1"><stop offset="0" stop-color="#2a72c0"/><stop offset="0.3" stop-color="#1456a8"/><stop offset="1" stop-color="#0a3a7a"/></linearGradient><linearGradient id="p12m" x1="0" y1="0" x2="1" y2="0.3"><stop offset="0" stop-color="#b06a44"/><stop offset="0.5" stop-color="#8a5034"/><stop offset="1" stop-color="#6a4030"/></linearGradient><filter id="p12b"><feGaussianBlur stdDeviation="0.9"/></filter></defs><rect width="72" height="96" fill="#1a5aa8"/><g filter="url(#p12b)"><rect x="-2" y="-2" width="76" height="36" fill="url(#p12s)"/><rect x="-2" y="31" width="76" height="42" fill="url(#p12w)"/><path d="M-2 30 L14 25 L31 19 L46 25 L62 30 L74 27 V33 H-2 Z" fill="url(#p12m)"/><path d="M26 24 L31 20 L40 26 L34 31 L24 30 Z" fill="#5a3828" opacity="0.5"/><path d="M62 30 L68 27 L74 27 V33 L62 33 Z" fill="#3a4030"/><path d="M-2 53 L8 54 L11 62 L8 70 L-2 72 Z" fill="#d87a2c"/><path d="M8 70 L16 62 L14 72 Z" fill="#5a3a58" opacity="0.6"/><path d="M-2 72 L20 68 L50 67 L74 70 V98 H-2 Z" fill="#a64a28"/><path d="M-2 82 L74 80 V98 H-2 Z" fill="#8e3e22" opacity="0.7"/><path d="M-2 84 L14 82 L16 98 H-2 Z" fill="#3a2a24"/></g><ellipse cx="28" cy="37" rx="2.2" ry="1.2" fill="#e8eef4" opacity="0.8"/><path d="M15 98 L15 86 Q18 80 23 82 L28 98 Z" fill="#a49878"/><path d="M47 98 L47 88 Q50 82 55 83 L58 98 Z" fill="#948a6c"/></svg></div><svg class="a" style="left:814px;top:581px" width="12" height="11" viewBox="0 0 12 11"><g stroke="#3a7aa8" stroke-width="1.3" stroke-linecap="round" fill="none"><path d="M9.6 1.2 V5.8"/><path d="M3.6 3.4 L7.6 7.4"/><path d="M1.4 9.4 H6.6"/></g></svg><div class="nm" style="left:802px;top:588px">RenderedImage 12.JPG</div><div class="dt" style="left:802px;top:608px">4 minutes ago</div><div class="ph" style="left:1042px;top:479px;width:72px;height:96px"><svg width="72" height="96" viewBox="0 0 72 96" preserveAspectRatio="none"><defs><linearGradient id="p14s" x1="0" y1="0" x2="0" y2="1"><stop offset="0" stop-color="#0a70de"/><stop offset="0.6" stop-color="#2a9cf0"/><stop offset="1" stop-color="#60b8ec"/></linearGradient><linearGradient id="p14w" x1="0" y1="0" x2="0" y2="1"><stop offset="0" stop-color="#2e4e3a"/><stop offset="0.4" stop-color="#1e5cb8"/><stop offset="1" stop-color="#2a66c4"/></linearGradient><filter id="p14b"><feGaussianBlur stdDeviation="1"/></filter></defs><rect width="72" height="96" fill="#2a64b0"/><g filter="url(#p14b)"><rect x="-2" y="-2" width="76" height="50" fill="url(#p14s)"/><path d="M-2 29 Q12 24 24 30 L58 44 L74 44 V48 H-2 Z" fill="#46562a"/><path d="M-2 36 L30 38 L50 44 L-2 46 Z" fill="#7a7040" opacity="0.5"/><path d="M56 44 L74 40 V50 L56 50 Z" fill="#c0a060"/><path d="M62 20 L66 30 L70 10 L72 42 L60 42 Z" fill="#c8b8a0" opacity="0.5"/><rect x="-2" y="46" width="76" height="32" fill="url(#p14w)"/><path d="M-2 48 L40 50 L40 58 L-2 62 Z" fill="#3a5a3a" opacity="0.7"/><path d="M-2 98 L-2 78 L30 72 L74 76 V98 Z" fill="#8a4420"/><path d="M-2 98 L40 72 L46 76 L12 98 Z" fill="#2a3040"/><path d="M50 98 L60 80 L74 84 V98 Z" fill="#9a4a20"/></g><path d="M34 66 L42 63 L52 70 L50 76 L40 74 Z" fill="#c89a60"/><ellipse cx="35" cy="65" rx="3.5" ry="2.5" fill="#e8e0d0"/></svg></div><svg class="a" style="left:998px;top:581px" width="12" height="11" viewBox="0 0 12 11"><g stroke="#3a7aa8" stroke-width="1.3" stroke-linecap="round" fill="none"><path d="M9.6 1.2 V5.8"/><path d="M3.6 3.4 L7.6 7.4"/><path d="M1.4 9.4 H6.6"/></g></svg><div class="nm" style="left:986px;top:588px">RenderedImage 14.JPG</div><div class="dt" style="left:986px;top:608px">5 minutes ago</div><div class="ph" style="left:306px;top:658px;width:72px;height:96px"><svg width="72" height="96" viewBox="0 0 72 96" preserveAspectRatio="none"><defs><linearGradient id="p15s" x1="0" y1="0" x2="0" y2="1"><stop offset="0" stop-color="#0672e0"/><stop offset="0.6" stop-color="#1e8cec"/><stop offset="1" stop-color="#48a8f0"/></linearGradient><linearGradient id="p15w" x1="0" y1="0" x2="0" y2="1"><stop offset="0" stop-color="#1e6aa8"/><stop offset="0.5" stop-color="#1e5290"/><stop offset="1" stop-color="#3a4068"/></linearGradient><linearGradient id="p15m" x1="0" y1="0" x2="0" y2="1"><stop offset="0" stop-color="#3e4a28"/><stop offset="0.6" stop-color="#6a6230"/><stop offset="1" stop-color="#8a7a44"/></linearGradient><linearGradient id="p15r" x1="0" y1="0" x2="0" y2="1"><stop offset="0" stop-color="#5a4048"/><stop offset="0.4" stop-color="#7a4232"/><stop offset="1" stop-color="#7a3a28"/></linearGradient><filter id="p15b"><feGaussianBlur stdDeviation="1"/></filter></defs><rect width="72" height="96" fill="#1e5a98"/><g filter="url(#p15b)"><rect x="-2" y="-2" width="76" height="48" fill="url(#p15s)"/><path d="M-2 38 L14 33 L28 29.5 L40 35 L58 41 L74 45 V52 H-2 Z" fill="url(#p15m)"/><path d="M-2 47 L74 48 V53 H-2 Z" fill="#b89a58"/><rect x="-2" y="52" width="76" height="20" fill="url(#p15w)"/><rect x="-2" y="70" width="76" height="28" fill="url(#p15r)"/></g><path d="M17 70 L18.5 54 L20 52 L21 60 L20 70 Z" fill="#c0c8d0" opacity="0.85"/></svg></div><svg class="a" style="left:262px;top:760px" width="12" height="11" viewBox="0 0 12 11"><g stroke="#3a7aa8" stroke-width="1.3" stroke-linecap="round" fill="none"><path d="M9.6 1.2 V5.8"/><path d="M3.6 3.4 L7.6 7.4"/><path d="M1.4 9.4 H6.6"/></g></svg><div class="nm" style="left:250px;top:767px">RenderedImage 15.JPG</div><div class="dt" style="left:250px;top:787px">5 minutes ago</div><div class="ph" style="left:490px;top:658px;width:72px;height:96px"><svg width="72" height="96" viewBox="0 0 72 96" preserveAspectRatio="none"><defs><filter id="p16b"><feGaussianBlur stdDeviation="1"/></filter><filter id="p16c"><feGaussianBlur stdDeviation="0.4"/></filter></defs><rect width="72" height="96" fill="#8a3c1e"/><g filter="url(#p16b)"><rect x="-2" y="-2" width="76" height="8" fill="#c8d8e8"/><path d="M-2 3 L20 2 L40 4 L74 3 V10 H-2 Z" fill="#5e7c98"/><path d="M-2 -2 L14 -2 L16 8 L-2 10 Z" fill="#3a4a3e"/><rect x="-2" y="8" width="76" height="8" fill="#6a8050"/><rect x="-2" y="14" width="24" height="10" fill="#a0c0d0"/><path d="M20 30 Q22 12 36 9 L74 7 V32 Z" fill="#c4a264"/><path d="M40 12 L74 10 V24 L50 22 Z" fill="#d4b070" opacity="0.6"/><path d="M-2 24 L20 26 L74 28 V38 L-2 36 Z" fill="#788848"/><path d="M-2 36 L74 38 V98 H-2 Z" fill="#8e3e1e"/><path d="M44 38 L74 36 V46 L54 46 Z" fill="#5e2812" opacity="0.8"/><path d="M-2 84 L74 86 V98 H-2 Z" fill="#7a3018" opacity="0.8"/></g><path d="M30 38 Q32 28 38 27 Q43 28 42 38 Z" fill="#b09468"/><g filter="url(#p16c)"><ellipse cx="70.1" cy="60.3" rx="1.7" ry="1.2" fill="#d0a888" opacity="0.55"/><ellipse cx="67.7" cy="66.7" rx="1.3" ry="1.0" fill="#d0a888" opacity="0.55"/><ellipse cx="64.9" cy="75.4" rx="1.6" ry="1.2" fill="#d0a888" opacity="0.55"/><ellipse cx="64.3" cy="76.9" rx="1.6" ry="1.3" fill="#d0a888" opacity="0.55"/><ellipse cx="54.4" cy="81.6" rx="1.7" ry="1.0" fill="#d0a888" opacity="0.55"/><ellipse cx="54.7" cy="81.6" rx="1.9" ry="1.4" fill="#d0a888" opacity="0.55"/><ellipse cx="44.0" cy="83.5" rx="2.0" ry="1.1" fill="#d0a888" opacity="0.55"/><ellipse cx="35.3" cy="81.9" rx="1.2" ry="1.0" fill="#d0a888" opacity="0.55"/><ellipse cx="26.5" cy="82.3" rx="1.4" ry="1.2" fill="#d0a888" opacity="0.55"/><ellipse cx="22.9" cy="80.7" rx="1.7" ry="1.4" fill="#d0a888" opacity="0.55"/><ellipse cx="18.6" cy="77.4" rx="2.2" ry="1.3" fill="#d0a888" opacity="0.55"/><ellipse cx="15.9" cy="75.4" rx="2.1" ry="1.2" fill="#d0a888" opacity="0.55"/><ellipse cx="9.4" cy="67.7" rx="1.7" ry="1.0" fill="#d0a888" opacity="0.55"/><ellipse cx="11.5" cy="65.9" rx="1.1" ry="1.4" fill="#d0a888" opacity="0.55"/><ellipse cx="9.4" cy="56.3" rx="1.9" ry="1.4" fill="#d0a888" opacity="0.55"/><ellipse cx="12.7" cy="51.8" rx="1.9" ry="1.0" fill="#d0a888" opacity="0.55"/><ellipse cx="21.0" cy="46.2" rx="2.2" ry="1.0" fill="#d0a888" opacity="0.55"/><ellipse cx="21.3" cy="43.1" rx="1.2" ry="1.1" fill="#d0a888" opacity="0.55"/><ellipse cx="28.6" cy="39.4" rx="2.0" ry="1.0" fill="#d0a888" opacity="0.55"/><ellipse cx="40.7" cy="39.5" rx="1.6" ry="1.2" fill="#d0a888" opacity="0.55"/><ellipse cx="44.9" cy="40.5" rx="1.7" ry="1.5" fill="#d0a888" opacity="0.55"/><ellipse cx="50.4" cy="42.3" rx="1.3" ry="1.0" fill="#d0a888" opacity="0.55"/><ellipse cx="59.4" cy="45.4" rx="1.0" ry="1.1" fill="#d0a888" opacity="0.55"/><ellipse cx="60.9" cy="48.1" rx="1.8" ry="0.8" fill="#d0a888" opacity="0.55"/><ellipse cx="66.8" cy="53.0" rx="1.4" ry="1.3" fill="#d0a888" opacity="0.55"/><ellipse cx="67.5" cy="56.0" rx="1.8" ry="1.5" fill="#d0a888" opacity="0.55"/><circle cx="27.6" cy="61.9" r="1.1" fill="#d8b898" opacity="0.5"/><circle cx="31.0" cy="58.5" r="0.9" fill="#d8b898" opacity="0.5"/><circle cx="33.5" cy="67.0" r="0.8" fill="#d8b898" opacity="0.5"/><circle cx="33.9" cy="73.6" r="0.6" fill="#d8b898" opacity="0.5"/><circle cx="43.5" cy="72.2" r="0.8" fill="#d8b898" opacity="0.5"/><circle cx="26.1" cy="74.7" r="0.8" fill="#d8b898" opacity="0.5"/><circle cx="24.4" cy="61.1" r="1.2" fill="#d8b898" opacity="0.5"/><circle cx="20.1" cy="56.9" r="0.9" fill="#d8b898" opacity="0.5"/><circle cx="56.7" cy="61.2" r="1.3" fill="#d8b898" opacity="0.5"/><circle cx="23.5" cy="57.5" r="1.1" fill="#d8b898" opacity="0.5"/><circle cx="59.2" cy="61.7" r="0.8" fill="#d8b898" opacity="0.5"/><circle cx="21.0" cy="64.6" r="0.8" fill="#d8b898" opacity="0.5"/><circle cx="55.3" cy="76.0" r="0.7" fill="#d8b898" opacity="0.5"/><circle cx="28.9" cy="74.9" r="1.1" fill="#d8b898" opacity="0.5"/><circle cx="55.3" cy="57.8" r="0.7" fill="#d8b898" opacity="0.5"/><circle cx="29.6" cy="74.4" r="0.8" fill="#d8b898" opacity="0.5"/><circle cx="32.3" cy="60.4" r="0.9" fill="#d8b898" opacity="0.5"/><circle cx="35.5" cy="79.1" r="0.7" fill="#d8b898" opacity="0.5"/><path d="M30 50 L58 58 M44 46 L40 62 M22 70 L30 76 M18 60 L26 64 M50 62 L60 68" stroke="#dcc8a8" stroke-width="0.9" opacity="0.55"/><path d="M52 68 L56 76 M49 73 L59 71 M50 76 L57 68" stroke="#e07838" stroke-width="1.1" opacity="0.7"/></g></svg></div><svg class="a" style="left:446px;top:760px" width="12" height="11" viewBox="0 0 12 11"><g stroke="#3a7aa8" stroke-width="1.3" stroke-linecap="round" fill="none"><path d="M9.6 1.2 V5.8"/><path d="M3.6 3.4 L7.6 7.4"/><path d="M1.4 9.4 H6.6"/></g></svg><div class="nm" style="left:434px;top:767px">RenderedImage 16.JPG</div><div class="dt" style="left:434px;top:787px">4 minutes ago</div><div class="ph" style="left:674px;top:658px;width:72px;height:96px"><svg width="72" height="96" viewBox="0 0 72 96" preserveAspectRatio="none"><defs><linearGradient id="pRs" x1="0" y1="0" x2="0" y2="1"><stop offset="0" stop-color="#0a58b0"/><stop offset="0.5" stop-color="#1a78c8"/><stop offset="1" stop-color="#6aa0c8"/></linearGradient><linearGradient id="pRw" x1="0" y1="0" x2="0" y2="1"><stop offset="0" stop-color="#a88e60"/><stop offset="0.2" stop-color="#6a8098"/><stop offset="0.45" stop-color="#2a5a90"/><stop offset="0.75" stop-color="#0e3058"/><stop offset="1" stop-color="#06121e"/></linearGradient><radialGradient id="pRsun" cx="0.5" cy="0.5" r="0.5"><stop offset="0" stop-color="#fff4c8" stop-opacity="1"/><stop offset="0.3" stop-color="#f8d890" stop-opacity="0.8"/><stop offset="1" stop-color="#e8a850" stop-opacity="0"/></radialGradient><filter id="pRb"><feGaussianBlur stdDeviation="1"/></filter></defs><rect width="72" height="96" fill="#0e3058"/><g filter="url(#pRb)"><rect x="-2" y="-2" width="76" height="42" fill="url(#pRs)"/><path d="M-2 30 Q20 22 40 26 Q60 24 74 30 V40 H-2 Z" fill="#b8c4cc" opacity="0.6"/><ellipse cx="40" cy="38" rx="34" ry="8" fill="url(#pRsun)"/><rect x="-2" y="50" width="76" height="48" fill="url(#pRw)"/><path d="M-2 41 L20 40 L26 38 L31 36 L34 38 L42 44 L60 44 L74 42 V54 H-2 Z" fill="#10161c"/><path d="M36 54 L46 54 L52 68 L40 72 Z" fill="#f0d898" opacity="0.45"/><path d="M32 72 Q44 68 74 72 L74 74 Q50 72 34 76 Z" fill="#aab8c8" opacity="0.5"/></g><ellipse cx="40" cy="72" rx="3" ry="1.5" fill="#102030"/></svg></div><svg class="a" style="left:639px;top:760px" width="12" height="11" viewBox="0 0 12 11"><g stroke="#3a7aa8" stroke-width="1.3" stroke-linecap="round" fill="none"><path d="M9.6 1.2 V5.8"/><path d="M3.6 3.4 L7.6 7.4"/><path d="M1.4 9.4 H6.6"/></g></svg><div class="nm" style="left:618px;top:767px">RenderedImage.JPG</div><div class="dt" style="left:618px;top:787px">5 minutes ago</div></body></html>
